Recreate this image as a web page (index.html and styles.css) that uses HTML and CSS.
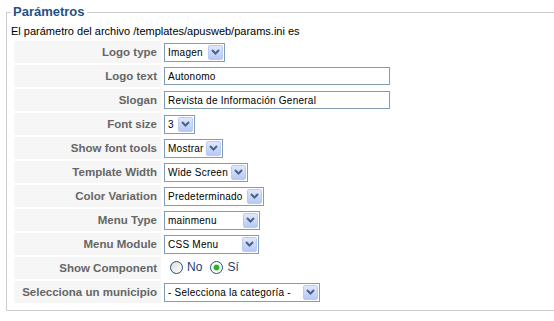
FILE: index.html
```html
<!DOCTYPE html>
<html lang="es">
<head>
  <meta charset="UTF-8">
  <title>Parámetros</title>
  <link rel="stylesheet" href="styles.css">
</head>
<body>

  <fieldset class="params">
    <legend>Parámetros</legend>
    <p class="intro">El parámetro del archivo /templates/apusweb/params.ini es</p>

    <table class="paramlist">
      <tr>
        <td class="key">Logo type</td>
        <td class="val">
          <span class="select w61"><select><option>Imagen</option></select><span class="arrow"><svg width="9" height="6" viewBox="0 0 9 6"><path d="M1 1l3.5 3.5L8 1" fill="none" stroke="#4d6185" stroke-width="2"/></svg></span></span>
        </td>
      </tr>
      <tr>
        <td class="key">Logo text</td>
        <td class="val"><input class="text" type="text" value="Autonomo"></td>
      </tr>
      <tr>
        <td class="key">Slogan</td>
        <td class="val"><input class="text" type="text" value="Revista de Información General"></td>
      </tr>
      <tr>
        <td class="key">Font size</td>
        <td class="val">
          <span class="select w31"><select><option>3</option></select><span class="arrow"><svg width="9" height="6" viewBox="0 0 9 6"><path d="M1 1l3.5 3.5L8 1" fill="none" stroke="#4d6185" stroke-width="2"/></svg></span></span>
        </td>
      </tr>
      <tr>
        <td class="key">Show font tools</td>
        <td class="val">
          <span class="select w59"><select><option>Mostrar</option></select><span class="arrow"><svg width="9" height="6" viewBox="0 0 9 6"><path d="M1 1l3.5 3.5L8 1" fill="none" stroke="#4d6185" stroke-width="2"/></svg></span></span>
        </td>
      </tr>
      <tr>
        <td class="key">Template Width</td>
        <td class="val">
          <span class="select w84"><select><option>Wide Screen</option></select><span class="arrow"><svg width="9" height="6" viewBox="0 0 9 6"><path d="M1 1l3.5 3.5L8 1" fill="none" stroke="#4d6185" stroke-width="2"/></svg></span></span>
        </td>
      </tr>
      <tr>
        <td class="key">Color Variation</td>
        <td class="val">
          <span class="select w100"><select><option>Predeterminado</option></select><span class="arrow"><svg width="9" height="6" viewBox="0 0 9 6"><path d="M1 1l3.5 3.5L8 1" fill="none" stroke="#4d6185" stroke-width="2"/></svg></span></span>
        </td>
      </tr>
      <tr>
        <td class="key">Menu Type</td>
        <td class="val">
          <span class="select w96"><select><option>mainmenu</option></select><span class="arrow"><svg width="9" height="6" viewBox="0 0 9 6"><path d="M1 1l3.5 3.5L8 1" fill="none" stroke="#4d6185" stroke-width="2"/></svg></span></span>
        </td>
      </tr>
      <tr>
        <td class="key">Menu Module</td>
        <td class="val">
          <span class="select w95"><select><option>CSS Menu</option></select><span class="arrow"><svg width="9" height="6" viewBox="0 0 9 6"><path d="M1 1l3.5 3.5L8 1" fill="none" stroke="#4d6185" stroke-width="2"/></svg></span></span>
        </td>
      </tr>
      <tr>
        <td class="key">Show Component</td>
        <td class="val">
          <label class="radio"><span class="dot"></span>No</label>
          <label class="radio"><span class="dot on"></span>Sí</label>
        </td>
      </tr>
      <tr>
        <td class="key">Selecciona un municipio</td>
        <td class="val">
          <span class="select w156"><select><option>- Selecciona la categoría -</option></select><span class="arrow"><svg width="9" height="6" viewBox="0 0 9 6"><path d="M1 1l3.5 3.5L8 1" fill="none" stroke="#4d6185" stroke-width="2"/></svg></span></span>
        </td>
      </tr>
    </table>
  </fieldset>

</body>
</html>
```

FILE: styles.css
```css
html {
  overflow-x: hidden;
}

body {
  margin: 0;
  background-color: #fff;
  font-family: "Liberation Sans", Arial, sans-serif;
  font-size: 11px;
  color: #000;
}

.params {
  box-sizing: border-box;
  width: 560px;
  margin: 4px 0 0 6px;
  padding: 0 4px 5px 4px;
  border: 1px solid #ccc;
  border-right: none;
}

.params legend {
  padding: 0 2px;
  color: #1f5186;
  font-size: 13px;
  font-weight: bold;
  line-height: 16px;
}

.intro {
  margin: 4px 0 1px 0;
  line-height: 14px;
}

.paramlist {
  margin-left: 1px;
  border-spacing: 2px;
}

.paramlist td {
  height: 22px;
  padding: 0;
}

.key {
  width: 143px;
  padding-right: 4px !important;
  background-color: #f6f6f6;
  color: #666;
  font-weight: bold;
  font-size: 11.5px;
  text-align: right;
}

.val {
  padding-left: 1px !important;
}

.text {
  box-sizing: border-box;
  width: 226px;
  height: 18px;
  margin: 0;
  padding: 0 3px;
  border: 1px solid #7f9db9;
  font-family: "Liberation Sans", Arial, sans-serif;
  font-size: 10px;
  letter-spacing: 0.25px;
  vertical-align: middle;
}

.select {
  display: inline-flex;
  align-items: center;
  box-sizing: border-box;
  height: 19px;
  border: 1px solid #7f9db9;
  background-color: #fff;
  vertical-align: middle;
}

.select select {
  flex: 1;
  min-width: 0;
  height: 17px;
  margin: 0;
  padding: 0 0 0 3px;
  border: none;
  background: transparent;
  appearance: none;
  font-family: "Liberation Sans", Arial, sans-serif;
  font-size: 10px;
  letter-spacing: 0.25px;
  color: #000;
  outline: none;
}

.select .arrow {
  display: flex;
  align-items: center;
  justify-content: center;
  box-sizing: border-box;
  width: 15px;
  height: 15px;
  margin-right: 1px;
  border: 1px solid #b9cbf3;
  border-radius: 2px;
  background: linear-gradient(#dfe8fd, #b6c9f5);
}

.w31 { width: 31px; }
.w59 { width: 59px; }
.w61 { width: 61px; }
.w84 { width: 84px; }
.w95 { width: 95px; }
.w96 { width: 96px; }
.w100 { width: 100px; }
.w156 { width: 156px; }

.radio {
  display: inline-flex;
  align-items: center;
  margin-left: 6px;
  margin-right: -1px;
  color: #1f3a6e;
  font-size: 12px;
}

.radio .dot {
  box-sizing: border-box;
  width: 13px;
  height: 13px;
  margin-right: 4px;
  border: 1px solid #1c5180;
  border-radius: 50%;
  background: linear-gradient(135deg, #dcdcd7, #fff);
}

.radio .dot.on {
  background: radial-gradient(circle, #2bb02b 0 2.5px, #b7e7a6 3px, #fff 4px);
}
```
